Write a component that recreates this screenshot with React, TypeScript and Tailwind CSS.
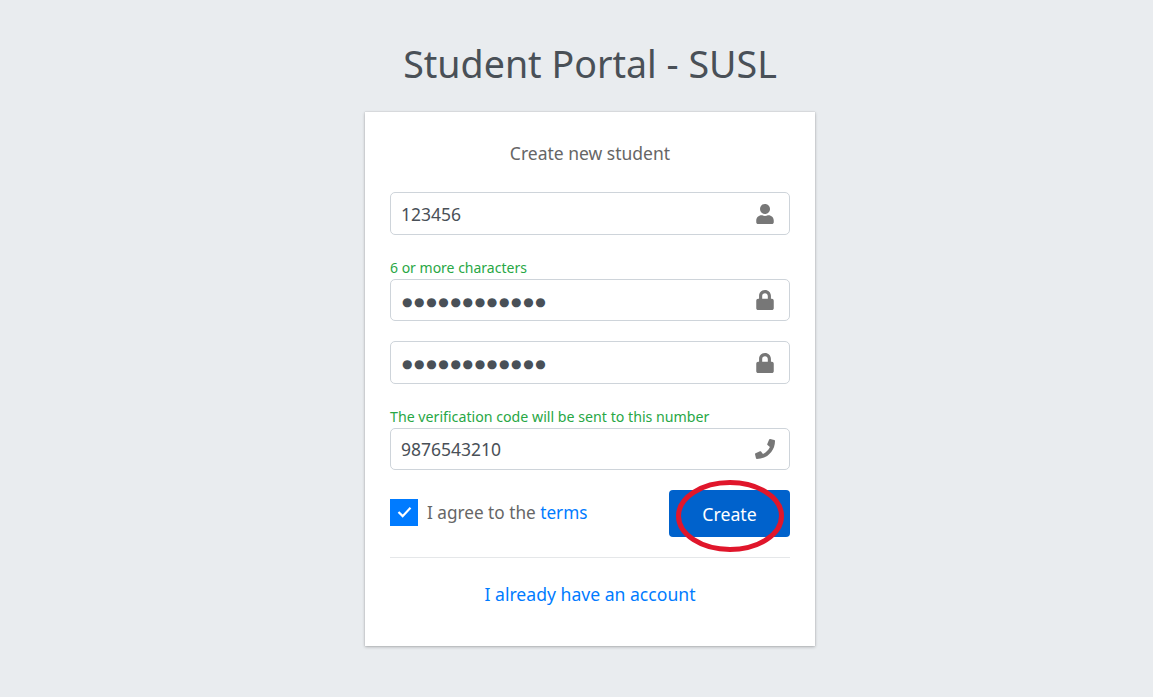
import { FaUser, FaLock, FaPhone } from "react-icons/fa";
import type { ReactNode } from "react";

function Field({ children, icon, height }: { children: ReactNode; icon: ReactNode; height: string }) {
  return (
    <div className={`${height} flex items-center justify-between rounded-[5px] border border-[#ced4da] bg-white pl-[10px] pr-[14px] text-[17.5px] text-[#495057]`}>
      <div className="flex-1 leading-none">{children}</div>
      <div className="text-[#777777]">{icon}</div>
    </div>
  );
}

const dots = "●●●●●●●●●●●●";

export default function App() {
  return (
    <div className="flex min-h-[697px] flex-col items-center bg-[#e9ecef] pl-[27px] pt-[39px] font-['Noto_Sans',sans-serif]">
      <h1 className="text-center text-[37.6px] leading-[50px] text-[#495057]">Student Portal - SUSL</h1>
      <div className="mt-[23px] h-[534px] w-[450px] bg-white px-[25px] pt-[29px] shadow-[0_0_1px_rgba(0,0,0,0.2),0_1px_3px_rgba(0,0,0,0.25)]">
        <p className="text-center text-[17.5px] leading-[24px] text-[#666666]">Create new student</p>
        <div className="mt-[27px]">
          <Field height="h-[43px]" icon={<FaUser size={20} />}><div className="pt-[2px]">123456</div></Field>
        </div>
        <p className="mt-[23px] text-[14px] leading-[20px] text-[#28a745]">6 or more characters</p>
        <div className="mt-[1px]">
          <Field height="h-[42px]" icon={<FaLock size={20} />}>
            <span className="ml-[1px] font-['DejaVu_Sans',sans-serif] text-[12px] tracking-[1.65px]">{dots}</span>
          </Field>
        </div>
        <div className="mt-[20px]">
          <Field height="h-[43px]" icon={<FaLock size={20} />}>
            <div className="pb-[2px]">
              <span className="ml-[1px] font-['DejaVu_Sans',sans-serif] text-[12px] tracking-[1.65px]">{dots}</span>
            </div>
          </Field>
        </div>
        <p className="mt-[22px] text-[14.2px] leading-[21px] text-[#28a745]">The verification code will be sent to this number</p>
        <div className="mt-[1px]">
          <Field height="h-[42px]" icon={<FaPhone size={20} />}><div className="pt-[2px]">9876543210</div></Field>
        </div>
        <div className="mt-[20px] flex items-center justify-between">
          <label className="flex items-center gap-[9px] pb-[3px]">
            <span className="flex h-[27px] w-[28px] items-center justify-center bg-[#007bff]">
              <svg width="15" height="12" viewBox="0 0 16 13" fill="none" stroke="white" strokeWidth="2.4">
                <path d="M1.5 6.5 L6 11 L14.5 2" />
              </svg>
            </span>
            <span className="pt-[1px] text-[17.2px] text-[#666666]">
              I agree to the <span className="text-[#007bff]">terms</span>
            </span>
          </label>
          <div className="relative">
            <button className="h-[47px] w-[121px] rounded-[4px] bg-[#0062cc] pt-[2px] text-[17.7px] text-white">Create</button>
            <svg className="absolute left-[6px] top-[-10px]" width="110" height="72" viewBox="0 0 110 72" fill="none">
              <ellipse cx="55" cy="36" rx="51.5" ry="33.5" stroke="#e0162b" strokeWidth="5" />
            </svg>
          </div>
        </div>
        <div className="mt-[20px] border-t border-[#e5e7e9] pt-[23px] text-center text-[17.6px] leading-[26px] text-[#007bff]">
          I already have an account
        </div>
      </div>
    </div>
  );
}
